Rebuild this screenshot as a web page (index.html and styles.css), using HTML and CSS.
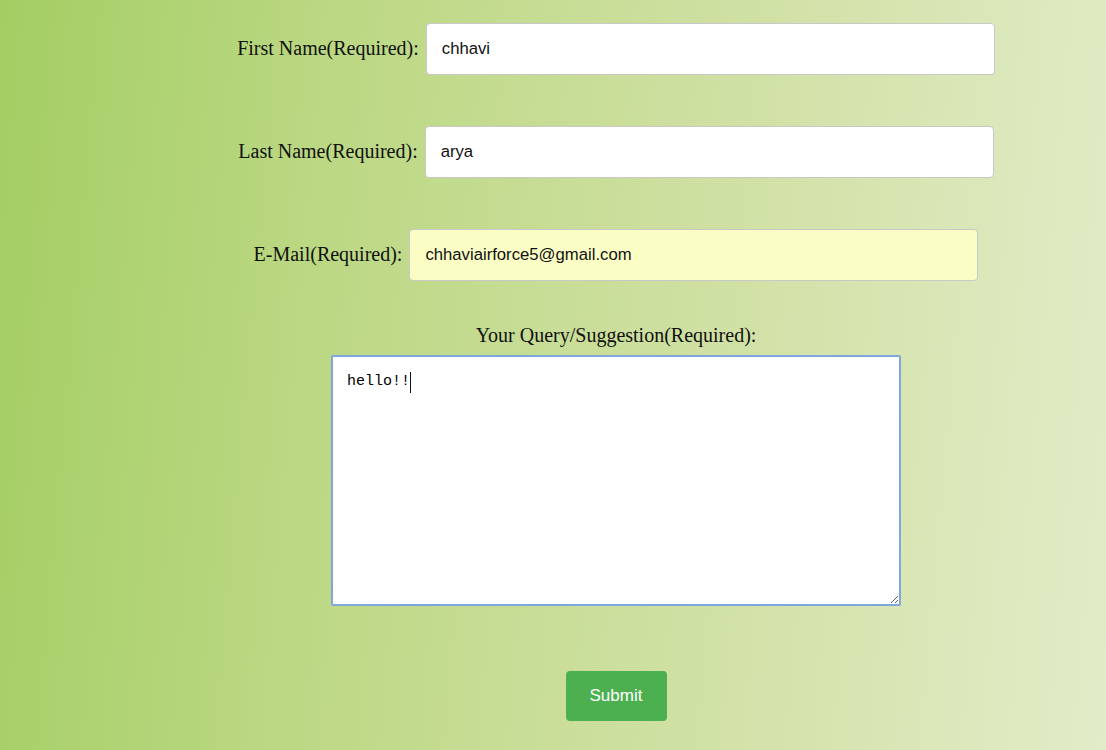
FILE: index.html
```html
<!DOCTYPE html>
<html>
<head>
<meta charset="utf-8">
<link rel="stylesheet" href="styles.css">
</head>
<body>
<form class="form">
  <div class="row">
    <label class="label" for="fn">First Name(Required):</label>
    <input class="field" id="fn" type="text" value="chhavi">
  </div>
  <div class="row">
    <label class="label" for="ln">Last Name(Required):</label>
    <input class="field" id="ln" type="text" value="arya">
  </div>
  <div class="row">
    <label class="label" for="em">E-Mail(Required):</label>
    <input class="field field-autofill" id="em" type="email" value="chhaviairforce5@gmail.com">
  </div>
  <div class="query">
    <label class="label" for="q">Your Query/Suggestion(Required):</label>
    <div class="area-wrap">
      <textarea class="area" id="q">hello!!</textarea>
      <span class="caret"></span>
    </div>
  </div>
  <button class="submit" type="button">Submit</button>
</form>
</body>
</html>
```
FILE: styles.css
```css
html, body {
  margin: 0;
  padding: 0;
  height: 100%;
}
body {
  background: linear-gradient(95deg, #a4ce64 0%, #bcd884 30%, #cfe0a2 62%, #e2ecc8 100%);
  font-family: "Liberation Serif", "Times New Roman", serif;
  overflow: hidden;
}
.form {
  display: flex;
  flex-direction: column;
  align-items: center;
  padding: 23px 0 0 126px;
}
.row {
  display: flex;
  align-items: center;
  gap: 7px;
  height: 52px;
  margin-bottom: 51px;
}
.label {
  font-size: 20px;
  color: #111;
}
.row .label {
  margin-top: -2px;
}
.field {
  box-sizing: border-box;
  width: 569px;
  height: 52px;
  border: 1px solid #c8c8c8;
  border-radius: 4px;
  padding: 0 15px;
  font-family: "Liberation Sans", Arial, sans-serif;
  font-size: 16.7px;
  color: #111;
  background: #fff;
  outline: none;
}
.field-autofill {
  background: #fafec5;
}
.query {
  display: flex;
  flex-direction: column;
  align-items: center;
  margin-top: -8px;
  gap: 8px;
}
.area-wrap {
  position: relative;
}
.area {
  display: block;
  box-sizing: border-box;
  width: 570px;
  height: 251px;
  border: 2px solid #7ea8dc;
  border-radius: 2px;
  padding: 16px 14px;
  font-family: "Liberation Mono", "Courier New", monospace;
  font-size: 15px;
  color: #000;
  background: #fff;
  outline: none;
  resize: both;
}
.caret {
  position: absolute;
  left: 79px;
  top: 17px;
  width: 1px;
  height: 21px;
  background: #111;
}
.submit {
  margin-top: 65px;
  width: 101px;
  height: 50px;
  border: none;
  border-radius: 4px;
  background: #4caf50;
  color: #fff;
  font-family: "Liberation Sans", Arial, sans-serif;
  font-size: 17px;
}
```
